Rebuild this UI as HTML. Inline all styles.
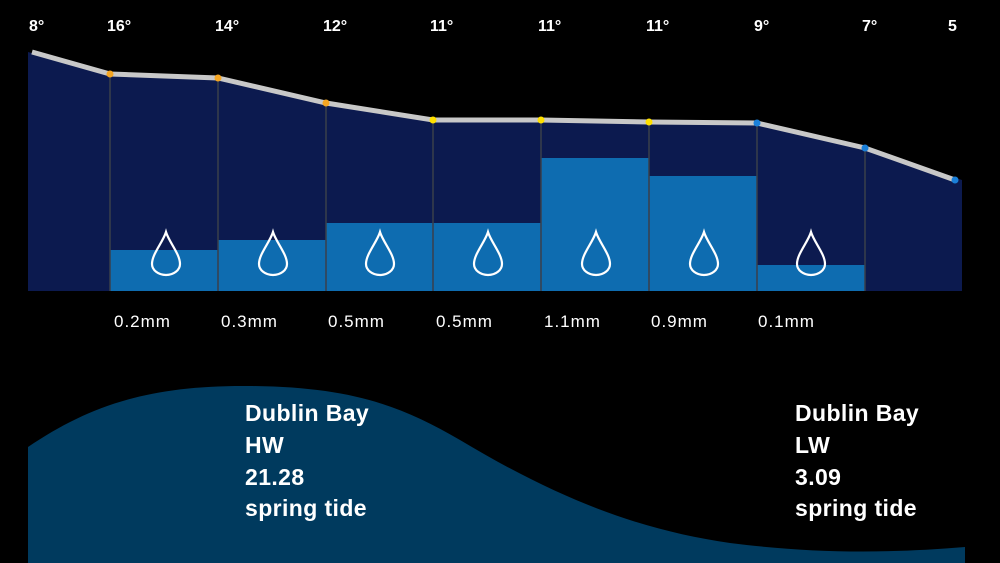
<!DOCTYPE html>
<html><head><meta charset="utf-8"><style>
html,body{margin:0;padding:0;background:#000;width:1000px;height:563px;overflow:hidden}
svg{display:block}
text{font-family:"Liberation Sans",sans-serif;fill:#fff}
</style></head><body>
<svg width="1000" height="563" viewBox="0 0 1000 563">
<rect width="1000" height="563" fill="#000"/>
<polygon points="28,52 110,74 218,78 326,103 433,120 541,120 649,122 757,123 865,148 962,180 962,291 28,291" fill="#0c1a4f"/>
<g fill="#0e6cb0">
<rect x="110" y="250" width="108" height="41"/>
<rect x="218" y="240" width="108" height="51"/>
<rect x="326" y="223" width="107" height="68"/>
<rect x="433" y="223" width="108" height="68"/>
<rect x="541" y="158" width="108" height="133"/>
<rect x="649" y="176" width="108" height="115"/>
<rect x="757" y="265" width="108" height="26"/>
</g>
<g stroke="#3a3f4a" stroke-width="1.5">
<line x1="110" y1="74" x2="110" y2="291"/><line x1="218" y1="78" x2="218" y2="291"/>
<line x1="326" y1="103" x2="326" y2="291"/><line x1="433" y1="120" x2="433" y2="291"/>
<line x1="541" y1="120" x2="541" y2="291"/><line x1="649" y1="122" x2="649" y2="291"/>
<line x1="757" y1="123" x2="757" y2="291"/><line x1="865" y1="148" x2="865" y2="291"/>
</g>
<polyline points="32,52 110,74 218,78 326,103 433,120 541,120 649,122 757,123 865,148 955,180" fill="none" stroke="#c8c8c8" stroke-width="5"/>
<g>
<circle cx="110" cy="74" r="3.5" fill="#f5a623"/><circle cx="218" cy="78" r="3.5" fill="#f5a623"/>
<circle cx="326" cy="103" r="3.5" fill="#f5a623"/><circle cx="433" cy="120" r="3.5" fill="#ffe000"/>
<circle cx="541" cy="120" r="3.5" fill="#ffe000"/><circle cx="649" cy="122" r="3.5" fill="#ffe000"/>
<circle cx="757" cy="123" r="3.5" fill="#1a7fd8"/><circle cx="865" cy="148" r="3.5" fill="#1a7fd8"/>
<circle cx="955" cy="180" r="3.5" fill="#1a7fd8"/>
</g>
<g fill="none" stroke="#fff" stroke-width="2.2">
<path d="M0,-30 C-3,-20 -14,-8 -14,2 A14,11 0 0 0 14,2 C14,-8 3,-20 0,-30Z" transform="translate(166,262)"/>
<path d="M0,-30 C-3,-20 -14,-8 -14,2 A14,11 0 0 0 14,2 C14,-8 3,-20 0,-30Z" transform="translate(273,262)"/>
<path d="M0,-30 C-3,-20 -14,-8 -14,2 A14,11 0 0 0 14,2 C14,-8 3,-20 0,-30Z" transform="translate(380,262)"/>
<path d="M0,-30 C-3,-20 -14,-8 -14,2 A14,11 0 0 0 14,2 C14,-8 3,-20 0,-30Z" transform="translate(488,262)"/>
<path d="M0,-30 C-3,-20 -14,-8 -14,2 A14,11 0 0 0 14,2 C14,-8 3,-20 0,-30Z" transform="translate(596,262)"/>
<path d="M0,-30 C-3,-20 -14,-8 -14,2 A14,11 0 0 0 14,2 C14,-8 3,-20 0,-30Z" transform="translate(704,262)"/>
<path d="M0,-30 C-3,-20 -14,-8 -14,2 A14,11 0 0 0 14,2 C14,-8 3,-20 0,-30Z" transform="translate(811,262)"/>
</g>
<g font-size="16" font-weight="bold">
<text x="29" y="31">8°</text><text x="107" y="31">16°</text><text x="215" y="31">14°</text>
<text x="323" y="31">12°</text><text x="430" y="31">11°</text><text x="538" y="31">11°</text>
<text x="646" y="31">11°</text><text x="754" y="31">9°</text><text x="862" y="31">7°</text>
<text x="948" y="31">5</text>
</g>
<g font-size="17" letter-spacing="1">
<text x="114" y="327">0.2mm</text><text x="221" y="327">0.3mm</text><text x="328" y="327">0.5mm</text>
<text x="436" y="327">0.5mm</text><text x="544" y="327">1.1mm</text><text x="651" y="327">0.9mm</text>
<text x="758" y="327">0.1mm</text>
</g>
<path d="M28,447 C90,405 150,385 250,386 C350,387 400,405 460,440 C560,500 640,530 730,543 C810,553 880,554 965,547 L965,563 L28,563Z" fill="#003a5e"/>
<g font-size="23" font-weight="bold" letter-spacing="0.4">
<text x="245" y="421">Dublin Bay</text><text x="245" y="453">HW</text>
<text x="245" y="485">21.28</text><text x="245" y="516">spring tide</text>
<text x="795" y="421">Dublin Bay</text><text x="795" y="453">LW</text>
<text x="795" y="485">3.09</text><text x="795" y="516">spring tide</text>
</g>
</svg>
</body></html>
